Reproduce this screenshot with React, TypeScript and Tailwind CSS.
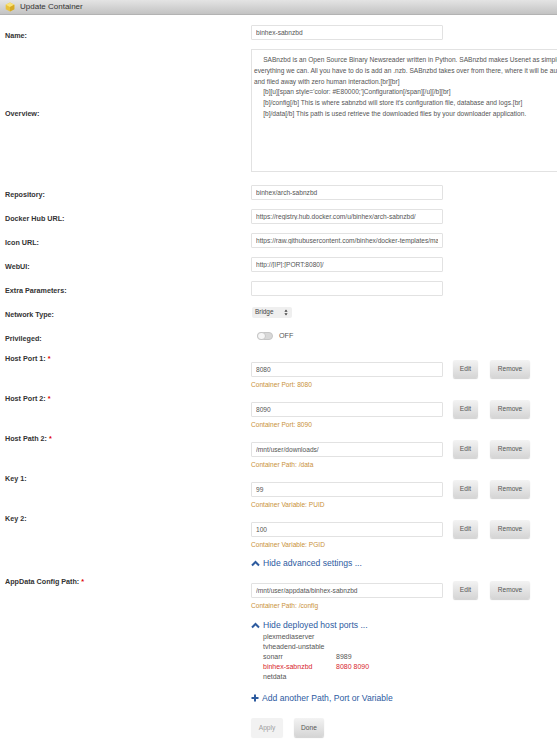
import React from 'react';

type PortRow = {
  label: string;
  required?: boolean;
  value: string;
  desc: string;
};

const ports: PortRow[] = [
  { label: 'Host Port 1:', required: true, value: '8080', desc: 'Container Port: 8080' },
  { label: 'Host Port 2:', required: true, value: '8090', desc: 'Container Port: 8090' },
  { label: 'Host Path 2:', required: true, value: '/mnt/user/downloads/', desc: 'Container Path: /data' },
  { label: 'Key 1:', value: '99', desc: 'Container Variable: PUID' },
  { label: 'Key 2:', value: '100', desc: 'Container Variable: PGID' },
];

const simpleFields = [
  { label: 'Repository:', value: 'binhex/arch-sabnzbd' },
  { label: 'Docker Hub URL:', value: 'https://registry.hub.docker.com/u/binhex/arch-sabnzbd/' },
  { label: 'Icon URL:', value: 'https://raw.githubusercontent.com/binhex/docker-templates/master/binhex/images/sabnzbd-icon.png' },
  { label: 'WebUI:', value: 'http://[IP]:[PORT:8080]/' },
  { label: 'Extra Parameters:', value: '' },
];

const hostPorts = [
  { name: 'plexmediaserver', ports: '' },
  { name: 'tvheadend-unstable', ports: '' },
  { name: 'sonarr', ports: '8989' },
  { name: 'binhex-sabnzbd', ports: '8080 8090', current: true },
  { name: 'netdata', ports: '' },
];

const overview = [
  '     SABnzbd is an Open Source Binary Newsreader written in Python. SABnzbd makes Usenet as simple and streamlined as possible by automating',
  'everything we can. All you have to do is add an .nzb. SABnzbd takes over from there, where it will be automatically downloaded, verified, repaired, extracted',
  'and filed away with zero human interaction.[br][br]',
  "     [b][u][span style='color: #E80000;']Configuration[/span][/u][/b][br]",
  "     [b]/config[/b] This is where sabnzbd will store it's configuration file, database and logs.[br]",
  '     [b]/data[/b] This path is used retrieve the downloaded files by your downloader application.',
].join('\n');

const Label = ({ text, required }: { text: string; required?: boolean }) => (
  <span className="font-bold text-[7.2px] text-[#333]">
    {text}
    {required && <span className="text-[#e00000]"> *</span>}
  </span>
);

const TextBox = ({ value }: { value: string }) => (
  <input
    readOnly
    value={value}
    className="w-[192px] h-[15px] border border-[#e2e2e2] bg-white px-[4px] text-[6.6px] text-[#555] rounded-[1px] outline-none"
  />
);

const GrayButton = ({ children, className }: { children: React.ReactNode; className: string }) => (
  <button
    className={`h-[18px] rounded-[2px] bg-linear-to-b from-[#f3f3f3] to-[#d5d5d5] shadow-[0_1px_1px_rgba(0,0,0,0.18)] text-[6.6px] text-[#555] ${className}`}
  >
    {children}
  </button>
);

const ChevronUp = () => (
  <svg width="9" height="7" viewBox="0 0 9 7" className="shrink-0">
    <polyline points="1,5.5 4.5,2 8,5.5" fill="none" stroke="#2d5b9f" strokeWidth="2" />
  </svg>
);

const PlusIcon = () => (
  <svg width="8" height="8" viewBox="0 0 8 8" className="shrink-0">
    <path d="M4 0.5v7M0.5 4h7" stroke="#2d5b9f" strokeWidth="2" />
  </svg>
);

const DockerIcon = () => (
  <svg width="10" height="10" viewBox="0 0 10 10">
    <polygon points="5,0.5 9.3,2.8 9.3,7.2 5,9.5 0.7,7.2 0.7,2.8" fill="#e9c23a" />
    <polygon points="5,0.5 9.3,2.8 5,5 0.7,2.8" fill="#f8e27a" />
    <polygon points="5,5 9.3,2.8 9.3,7.2 5,9.5" fill="#d6a925" />
  </svg>
);

export default function App() {
  return (
    <div className="w-full min-h-[750px] bg-white overflow-hidden font-['Liberation_Sans',Arial,sans-serif]">
      {/* window title */}
      <div className="h-[15px] flex items-center gap-[5px] pl-[5px] bg-linear-to-b from-[#e4e4e4] to-[#c3c3c3] border-b border-[#b3b3b3]">
        <DockerIcon />
        <span className="text-[8px] text-[#333]">Update Container</span>
      </div>

      <div className="mt-[5px] flex h-[25px] items-center">
        <div className="w-[251px] shrink-0 pl-[5px]">
          <Label text="Name:" />
        </div>
        <TextBox value="binhex-sabnzbd" />
      </div>

      <div className="mt-[4px] flex h-[123px] items-center">
        <div className="w-[251px] shrink-0 pl-[5px]">
          <Label text="Overview:" />
        </div>
        <div className="w-[340px] h-full shrink-0 border border-[#e2e2e2] pt-[5px] pl-[2px] overflow-hidden whitespace-pre text-[6.6px] leading-[10.8px] text-[#555]">
          {overview}
        </div>
      </div>

      <div className="mt-[8px]">
        {simpleFields.map((f) => (
          <div key={f.label} className="flex h-[24px] items-center">
            <div className="w-[251px] shrink-0 pl-[5px]">
              <Label text={f.label} />
            </div>
            <TextBox value={f.value} />
          </div>
        ))}

        <div className="flex h-[24px] items-center">
          <div className="w-[251px] shrink-0 pl-[5px]">
            <Label text="Network Type:" />
          </div>
          <div className="w-[40px] h-[11px] ml-[1px] rounded-[2px] bg-[#efefef] flex items-center justify-between pl-[3px] pr-[4px] text-[6.4px] text-[#444]">
            <span>Bridge</span>
            <svg width="4" height="7" viewBox="0 0 4 7">
              <polygon points="2,0.5 3.6,2.8 0.4,2.8" fill="#444" />
              <polygon points="2,6.5 3.6,4.2 0.4,4.2" fill="#444" />
            </svg>
          </div>
        </div>

        <div className="flex h-[24px] items-center">
          <div className="w-[251px] shrink-0 pl-[5px]">
            <Label text="Privileged:" />
          </div>
          <div className="ml-[6px] flex items-center gap-[6px]">
            <div className="relative w-[16px] h-[8px] rounded-full bg-[#d8d8d8] border border-[#c6c6c6]">
              <div className="absolute left-[-1px] top-[-1px] w-[9px] h-[8px] rounded-full bg-[#f6f6f6] border border-[#c6c6c6]" />
            </div>
            <span className="text-[7.2px] text-[#555]">OFF</span>
          </div>
        </div>
      </div>

      {/* paths, ports and variables */}
      <div className="mt-[4px]">
        {ports.map((p) => (
          <div key={p.label} className="flex h-[40px]">
            <div className="w-[251px] shrink-0 pl-[5px] leading-[8px]">
              <Label text={p.label} required={p.required} />
            </div>
            <div className="pt-[8px]">
              <div className="flex items-center">
                <TextBox value={p.value} />
                <GrayButton className="ml-[10px] w-[25px]">Edit</GrayButton>
                <GrayButton className="ml-[12px] w-[40px]">Remove</GrayButton>
              </div>
              <div className="leading-[14px] text-[6.6px] text-[#c9913a]">{p.desc}</div>
            </div>
          </div>
        ))}
      </div>

      <div className="mt-[4px] pl-[251px] flex items-center gap-[3px] h-[14px] text-[8.6px] text-[#2d5b9f]">
        <ChevronUp />
        <span>Hide advanced settings ...</span>
      </div>

      <div className="mt-[3px] flex h-[40px]">
        <div className="w-[251px] shrink-0 pl-[5px] leading-[12px]">
          <Label text="AppData Config Path:" required />
        </div>
        <div className="pt-[8px]">
          <div className="flex items-center">
            <TextBox value="/mnt/user/appdata/binhex-sabnzbd" />
            <GrayButton className="ml-[10px] w-[25px]">Edit</GrayButton>
            <GrayButton className="ml-[12px] w-[40px]">Remove</GrayButton>
          </div>
          <div className="leading-[14px] text-[6.6px] text-[#c9913a]">Container Path: /config</div>
        </div>
      </div>

      <div className="mt-[5px] pl-[251px]">
        <div className="flex items-center gap-[3px] h-[14px] text-[8.6px] text-[#2d5b9f]">
          <ChevronUp />
          <span>Hide deployed host ports ...</span>
        </div>
        <div className="ml-[12px] grid grid-cols-[73px_auto] leading-[10px] text-[7px] text-[#555]">
          {hostPorts.map((h) => (
            <React.Fragment key={h.name}>
              <span className={h.current ? 'text-[#d7262e]' : ''}>{h.name}</span>
              <span className={h.current ? 'text-[#d7262e]' : ''}>{h.ports}</span>
            </React.Fragment>
          ))}
        </div>

        <div className="mt-[9px] flex items-center gap-[3px] h-[14px] text-[8.6px] text-[#2d5b9f]">
          <PlusIcon />
          <span>Add another Path, Port or Variable</span>
        </div>

        <div className="mt-[13px] flex gap-[11px]">
          <button className="w-[32px] h-[19px] rounded-[2px] bg-[#f2f2f2] text-[6.6px] text-[#a0a0a0] shadow-[0_1px_1px_rgba(0,0,0,0.06)]">
            Apply
          </button>
          <GrayButton className="w-[30px] h-[19px] text-[#333]">Done</GrayButton>
        </div>
      </div>
    </div>
  );
}
